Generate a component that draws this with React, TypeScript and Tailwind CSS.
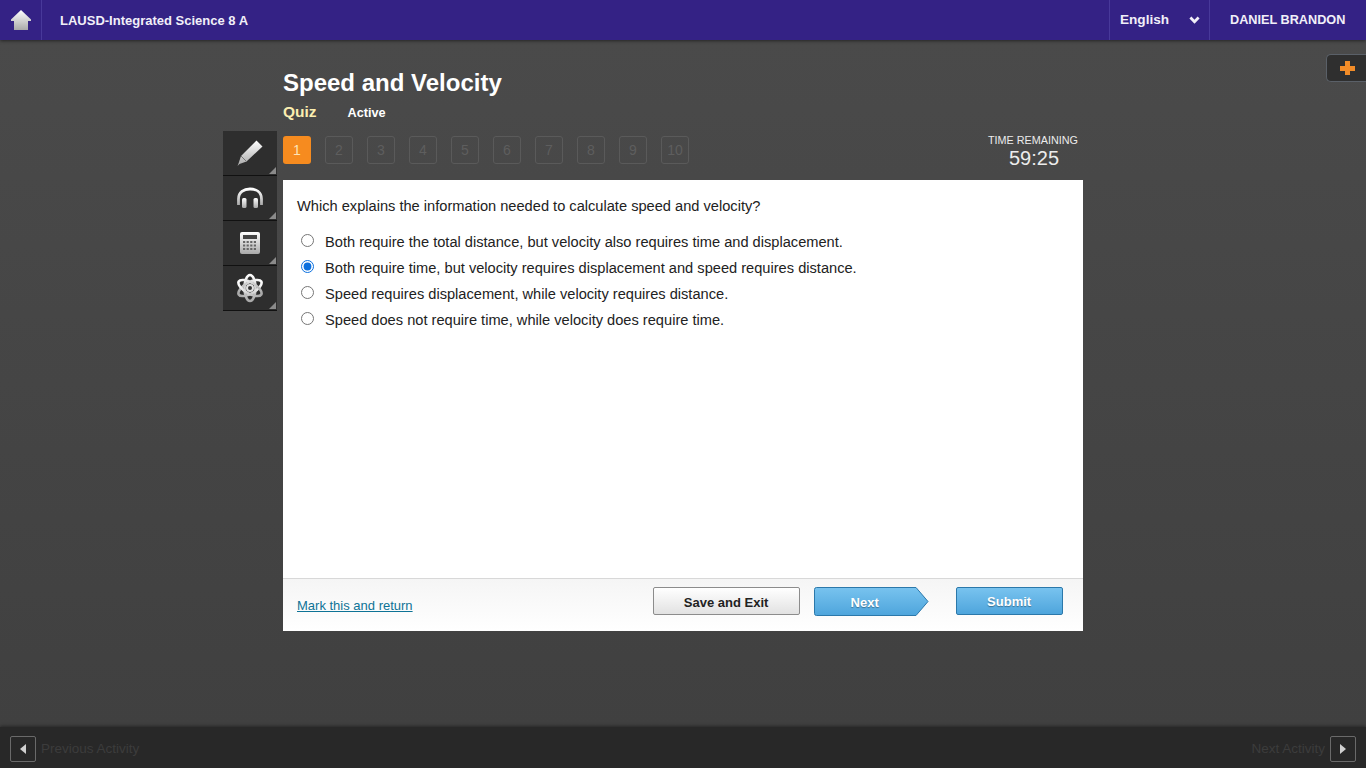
import React from "react";

const options = [
  "Both require the total distance, but velocity also requires time and displacement.",
  "Both require time, but velocity requires displacement and speed requires distance.",
  "Speed requires displacement, while velocity requires distance.",
  "Speed does not require time, while velocity does require time.",
];

const Grad = ({ id }: { id: string }) => (
  <linearGradient id={id} x1="0" y1="0" x2="0" y2="1">
    <stop offset="0" stopColor="#ffffff" />
    <stop offset="1" stopColor="#a9a9a9" />
  </linearGradient>
);

const ToolButton = ({ children }: { children: React.ReactNode }) => (
  <div className="relative flex h-[45px] w-[54px] items-center justify-center border-b border-[#111] bg-[#2e2e2e]">
    {children}
    <span className="absolute bottom-[1px] right-[1px] h-0 w-0 border-b-[7px] border-l-[7px] border-b-[#8a8a8a] border-l-transparent" />
  </div>
);

const App = () => {
  return (
    <div className="flex h-screen flex-col overflow-hidden bg-[#444444] font-['Liberation_Sans',sans-serif]">
      <header className="relative z-10 flex h-10 shrink-0 items-stretch bg-[#342285] text-white shadow-[0_1px_3px_rgba(0,0,0,0.5)]">
        <div className="flex w-[42px] items-center justify-center border-r border-[#48399a] pl-[1px]">
          <svg width="20" height="20" viewBox="0 0 20 20">
            <defs><Grad id="home" /></defs>
            <path d="M10 0 L20 9.5 V11 H17 V20 H3 V11 H0 V9.5 Z" fill="url(#home)" />
          </svg>
        </div>
        <div className="flex flex-1 items-center pl-[18px] pt-[1px] text-[13px] font-bold text-[#f1eff8]">LAUSD-Integrated Science 8 A</div>
        <div className="flex w-[101px] items-center justify-between border-x border-[#48399a] pl-[10px] pr-[9px] pt-[1px] text-[13.6px] font-bold text-[#f1eff8]">
          <span>English</span>
          <svg width="11" height="9" viewBox="0 0 11 9">
            <path d="M1.4 1.6 L5.5 5.8 L9.6 1.6" fill="none" stroke="#f1eff8" strokeWidth="2.8" />
          </svg>
        </div>
        <div className="flex w-[156px] items-center pl-[20px] pt-[1px] text-[12.7px] font-bold text-[#f1eff8]">DANIEL BRANDON</div>
      </header>

      <main className="relative flex flex-1 bg-gradient-to-b from-[#4a4a4a] to-[#404040] pl-[223px]">
        <div className="absolute right-0 top-[14px] flex h-[28px] w-[40px] items-center justify-center rounded-l-[5px] border border-r-0 border-[#5a6068] bg-[#2f2f2f] pl-[1px]">
          <span className="relative h-[14px] w-[14px]">
            <span className="absolute left-[5px] top-0 h-[14px] w-[5px] bg-[#f28c28]" />
            <span className="absolute left-0 top-[5px] h-[5px] w-[15px] bg-[#f28c28]" />
          </span>
        </div>

        <div className="mt-[91px] w-[60px] shrink-0">
          <ToolButton>
            <svg width="28" height="28" viewBox="0 0 28 28">
              <defs><Grad id="pen" /></defs>
              <path d="M20.5 1.5 L26.5 7.5 L10.5 22.5 L3.5 25 L1.5 27 L2.5 24.5 L5 17 Z" fill="url(#pen)" />
              <path d="M5 17 L10.5 22.5" stroke="#777" strokeWidth="1" />
            </svg>
          </ToolButton>
          <ToolButton>
            <svg width="28" height="24" viewBox="0 0 28 24">
              <defs><Grad id="phones" /></defs>
              <path d="M2.5 19 V13 C2.5 6 8 3 14 3 C20 3 25.5 6 25.5 13 V19" fill="none" stroke="url(#phones)" strokeWidth="2.8" />
              <rect x="6" y="12" width="4.5" height="10" rx="1.5" fill="url(#phones)" />
              <rect x="17.5" y="12" width="4.5" height="10" rx="1.5" fill="url(#phones)" />
            </svg>
          </ToolButton>
          <ToolButton>
            <svg width="22" height="24" viewBox="0 0 22 24">
              <defs><Grad id="calc" /></defs>
              <rect x="1" y="1" width="20" height="22" rx="2" fill="url(#calc)" />
              <rect x="4" y="4" width="14" height="4" fill="#444" />
              <path d="M4 11 h14 M4 14.5 h14 M4 18 h14" stroke="#666" strokeWidth="2" strokeDasharray="2.2 1.4" />
            </svg>
          </ToolButton>
          <ToolButton>
            <svg width="28" height="30" viewBox="0 0 28 30">
              <defs><Grad id="atom" /></defs>
              <g fill="none" stroke="url(#atom)" strokeWidth="2.6">
                <ellipse cx="14" cy="15" rx="5.5" ry="13" />
                <ellipse cx="14" cy="15" rx="5.5" ry="13" transform="rotate(60 14 15)" />
                <ellipse cx="14" cy="15" rx="5.5" ry="13" transform="rotate(-60 14 15)" />
              </g>
              <circle cx="14" cy="15" r="3" fill="#333" stroke="#e2e2e2" strokeWidth="2" />
            </svg>
          </ToolButton>
        </div>

        <div className="w-[800px]">
          <h1 className="mt-[27px] text-[24px] leading-[32px] font-bold text-white">Speed and Velocity</h1>
          <div className="mt-[1px] flex h-[24px] items-center">
            <span className="text-[15.5px] font-bold text-[#fbeeb0]">Quiz</span>
            <span className="ml-[31px] mt-[4px] text-[12.7px] font-bold text-white">Active</span>
          </div>
          <div className="mt-[4px] flex h-[52px] justify-between">
            <div className="mt-[8px] flex gap-[14px]">
              {[1, 2, 3, 4, 5, 6, 7, 8, 9, 10].map((n) => (
                <div
                  key={n}
                  className={
                    n === 1
                      ? "flex h-[28px] w-[28px] items-center justify-center rounded-[3px] bg-[#f68b1f] text-[14px] text-[#fde3b8]"
                      : "flex h-[28px] w-[28px] items-center justify-center rounded-[3px] border border-[#5a5a5a] text-[14px] text-[#5e5e5e]"
                  }
                >
                  {n}
                </div>
              ))}
            </div>
            <div className="mr-[5px] flex flex-col items-center pt-[5px] text-[#ececec]">
              <span className="text-[10.8px] leading-[14px]">TIME REMAINING</span>
              <span className="pl-[2px] text-[20px] leading-[22px]">59:25</span>
            </div>
          </div>

          <section className="flex h-[451px] flex-col bg-white">
            <div className="flex-1 px-[14px] pt-[17px] text-[14.63px] text-[#222]">
              <p className="leading-[18px]">Which explains the information needed to calculate speed and velocity?</p>
              <div className="mt-[14px] flex flex-col">
                {options.map((o, i) => (
                  <label key={i} className="flex h-[26px] items-center">
                    <input type="radio" name="answer" defaultChecked={i === 1} className="m-0 mb-[3px] ml-[4px] h-[13px] w-[13px] accent-[#0b6fde]" />
                    <span className="ml-[11px] leading-[18px]">{o}</span>
                  </label>
                ))}
              </div>
            </div>
            <div className="flex h-[53px] items-start border-t border-[#d8d8d8] bg-gradient-to-b from-[#f5f5f5] to-white pl-[14px] pt-[8px]">
              <a className="mt-[11px] text-[13px] leading-[16px] text-[#0e7396] underline">Mark this and return</a>
              <button className="ml-[240px] h-[28px] w-[147px] rounded-[2px] border border-[#8c8c8c] bg-gradient-to-b from-white to-[#e2e2e2] pt-[3px] text-[13px] font-bold text-[#222]">
                Save and Exit
              </button>
              <div className="relative ml-[14px] h-[29px] w-[115px]">
                <svg className="absolute inset-0" width="115" height="29" viewBox="0 0 115 29">
                  <defs>
                    <linearGradient id="nextBg" x1="0" y1="0" x2="0" y2="1">
                      <stop offset="0" stopColor="#78c3ef" />
                      <stop offset="1" stopColor="#4ea5dc" />
                    </linearGradient>
                  </defs>
                  <path d="M2.5 .5 H102 L114 14.5 L102 28.5 H2.5 Q.5 28.5 .5 26.5 V2.5 Q.5 .5 2.5 .5 Z" fill="url(#nextBg)" stroke="#2b78aa" />
                </svg>
                <span className="absolute left-[37px] top-[6px] text-[13px] font-bold text-white [text-shadow:0_1px_1px_rgba(0,0,0,0.35)]">Next</span>
              </div>
              <button className="ml-[27px] h-[28px] w-[107px] rounded-[2px] border border-[#2b78aa] bg-gradient-to-b from-[#78c3ef] to-[#4ea5dc] pt-[2px] text-[13px] font-bold text-white [text-shadow:0_1px_1px_rgba(0,0,0,0.35)]">
                Submit
              </button>
            </div>
          </section>
        </div>
      </main>

      <footer className="relative z-10 flex h-[41px] shrink-0 items-center justify-between bg-[#282828] px-[10px] pt-[2px] text-[13.5px] text-[#3c3c3c] shadow-[0_-1px_3px_rgba(0,0,0,0.4)]">
        <div className="flex items-center gap-[5px]">
          <div className="flex h-[26px] w-[26px] items-center justify-center rounded-[2px] border border-[#6a6a6a]">
            <span className="h-0 w-0 border-y-[5px] border-r-[6px] border-y-transparent border-r-[#d0d0d0]" />
          </div>
          <span className="pt-[2px]">Previous Activity</span>
        </div>
        <div className="flex items-center gap-[5px]">
          <span className="pt-[2px]">Next Activity</span>
          <div className="flex h-[26px] w-[26px] items-center justify-center rounded-[2px] border border-[#6a6a6a]">
            <span className="h-0 w-0 border-y-[5px] border-l-[6px] border-y-transparent border-l-[#d0d0d0]" />
          </div>
        </div>
      </footer>
    </div>
  );
};

export default App;
